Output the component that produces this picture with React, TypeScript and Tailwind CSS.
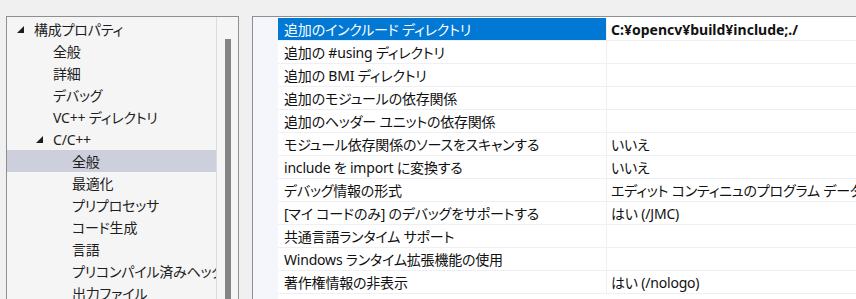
const treeItems: { label: string; level: number; expanded?: boolean; selected?: boolean }[] = [
  { label: '構成プロパティ', level: 0, expanded: true },
  { label: '全般', level: 1 },
  { label: '詳細', level: 1 },
  { label: 'デバッグ', level: 1 },
  { label: 'VC++ ディレクトリ', level: 1 },
  { label: 'C/C++', level: 1, expanded: true },
  { label: '全般', level: 2, selected: true },
  { label: '最適化', level: 2 },
  { label: 'プリプロセッサ', level: 2 },
  { label: 'コード生成', level: 2 },
  { label: '言語', level: 2 },
  { label: 'プリコンパイル済みヘッダー', level: 2 },
  { label: '出力ファイル', level: 2 },
]

const props: { name: string; value?: string; selected?: boolean; bold?: boolean }[] = [
  { name: '追加のインクルード ディレクトリ', value: 'C:¥opencv¥build¥include;./', selected: true, bold: true },
  { name: '追加の #using ディレクトリ' },
  { name: '追加の BMI ディレクトリ' },
  { name: '追加のモジュールの依存関係' },
  { name: '追加のヘッダー ユニットの依存関係' },
  { name: 'モジュール依存関係のソースをスキャンする', value: 'いいえ' },
  { name: 'include を import に変換する', value: 'いいえ' },
  { name: 'デバッグ情報の形式', value: 'エディット コンティニュのプログラム データベース (/ZI)' },
  { name: '[マイ コードのみ] のデバッグをサポートする', value: 'はい (/JMC)' },
  { name: '共通言語ランタイム サポート' },
  { name: 'Windows ランタイム拡張機能の使用' },
  { name: '著作権情報の非表示', value: 'はい (/nologo)' },
]

const indent = ['pl-[10px]', 'pl-[29px]', 'pl-[48px]']

function Caret() {
  return (
    <svg width="7" height="7" viewBox="0 0 7 7" className="shrink-0">
      <polygon points="7,0 7,7 0,7" fill="#1e1e1e" />
    </svg>
  )
}

function TreeRow({ item }: { item: (typeof treeItems)[number] }) {
  return (
    <div
      className={`flex h-[22px] items-center whitespace-nowrap ${indent[item.level]} ${
        item.selected ? 'bg-[#cdcfdc]' : ''
      }`}
    >
      <span className="flex w-[16px] shrink-0 justify-start">{item.expanded && <Caret />}</span>
      <span className="shrink-0 pl-[1px]">{item.label}</span>
    </div>
  )
}

export default function App() {
  return (
    <div
      className="flex h-[299px] w-[856px] overflow-hidden bg-[#f0f0f0] pl-[6px] pt-[16px] text-[14px] tracking-[-0.2px] text-[#1e1e1e] [font-family:'Noto_Sans','Noto_Sans_CJK_JP',sans-serif] [font-feature-settings:'palt']"
    >
      <div className="flex h-[300px] w-[233px] shrink-0 border border-[#8c8f94] bg-[#f5f5f5]">
        <div className="w-[209px] shrink-0 overflow-hidden pt-[1px]">
          {treeItems.map((item, i) => (
            <TreeRow key={i} item={item} />
          ))}
        </div>
        <div className="w-[1px] shrink-0 bg-[#dcdcdc]" />
        <div className="flex flex-1 justify-center pl-[1px] pt-[22px]">
          <div className="h-[280px] w-[6px] bg-[#858585]" />
        </div>
      </div>

      <div className="ml-[13px] flex h-[300px] flex-1 border-l border-t border-[#8c8f94] bg-white">
        <div className="w-[25px] shrink-0 bg-[#f4f6fb]" />
        <div className="flex flex-1 flex-col pt-[1px]">
          {props.map((p, i) => (
            <div key={i} className="flex h-[23px] shrink-0 border-b border-[#eef0f6]">
              <div
                className={`flex w-[328px] shrink-0 items-center whitespace-nowrap pl-[6px] ${
                  p.selected ? 'bg-[#0078d4] text-white' : 'text-[#111]'
                }`}
              >
                {p.name}
              </div>
              <div className="w-[1px] shrink-0 bg-[#eef0f6]" />
              <div
                className={`flex flex-1 items-center overflow-hidden whitespace-nowrap pl-[4px] text-[#111] ${
                  p.bold ? 'font-bold tracking-normal' : ''
                }`}
              >
                {p.value}
              </div>
            </div>
          ))}
        </div>
      </div>
    </div>
  )
}
